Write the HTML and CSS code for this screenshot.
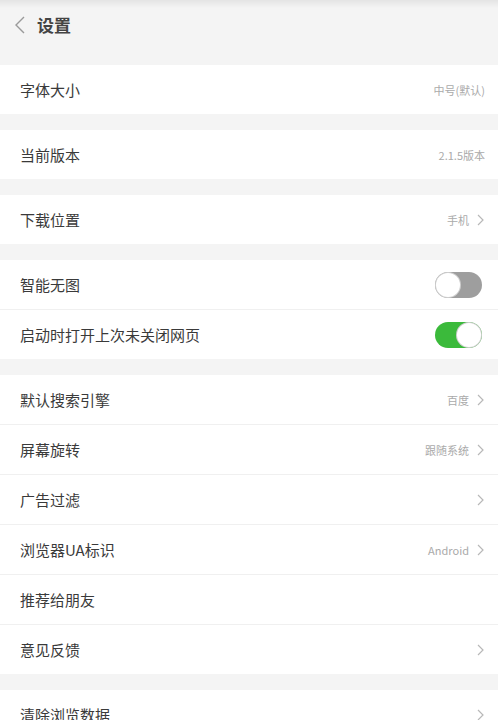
FILE: index.html
```html
<!DOCTYPE html>
<html lang="zh">
<head>
<meta charset="utf-8">
<title>设置</title>
<link rel="stylesheet" href="styles.css">
</head>
<body>
<div class="page">
  <header class="header">
    <svg class="back" width="12" height="18" viewBox="0 0 12 18"><path d="M10 1 L2 9 L10 17" fill="none" stroke="#9a9a9a" stroke-width="1.4"/></svg>
    <span class="title">设置</span>
  </header>

  <section class="group">
    <div class="row"><span class="label">字体大小</span><span class="value">中号(默认)</span></div>
  </section>
  <section class="group">
    <div class="row"><span class="label">当前版本</span><span class="value">2.1.5版本</span></div>
  </section>
  <section class="group">
    <div class="row"><span class="label">下载位置</span><span class="value">手机</span><svg class="chev" width="7" height="12" viewBox="0 0 7 12"><path d="M1 1 L6 6 L1 11" fill="none" stroke="#b8b8b8" stroke-width="1.2"/></svg></div>
  </section>
  <section class="group">
    <div class="row"><span class="label">智能无图</span><span class="toggle off"><span class="knob"></span></span></div>
    <div class="row"><span class="label">启动时打开上次未关闭网页</span><span class="toggle on"><span class="knob"></span></span></div>
  </section>
  <section class="group">
    <div class="row"><span class="label">默认搜索引擎</span><span class="value">百度</span><svg class="chev" width="7" height="12" viewBox="0 0 7 12"><path d="M1 1 L6 6 L1 11" fill="none" stroke="#b8b8b8" stroke-width="1.2"/></svg></div>
    <div class="row"><span class="label">屏幕旋转</span><span class="value">跟随系统</span><svg class="chev" width="7" height="12" viewBox="0 0 7 12"><path d="M1 1 L6 6 L1 11" fill="none" stroke="#b8b8b8" stroke-width="1.2"/></svg></div>
    <div class="row"><span class="label">广告过滤</span><svg class="chev" width="7" height="12" viewBox="0 0 7 12"><path d="M1 1 L6 6 L1 11" fill="none" stroke="#b8b8b8" stroke-width="1.2"/></svg></div>
    <div class="row"><span class="label">浏览器UA标识</span><span class="value">Android</span><svg class="chev" width="7" height="12" viewBox="0 0 7 12"><path d="M1 1 L6 6 L1 11" fill="none" stroke="#b8b8b8" stroke-width="1.2"/></svg></div>
    <div class="row"><span class="label">推荐给朋友</span></div>
    <div class="row"><span class="label">意见反馈</span><svg class="chev" width="7" height="12" viewBox="0 0 7 12"><path d="M1 1 L6 6 L1 11" fill="none" stroke="#b8b8b8" stroke-width="1.2"/></svg></div>
  </section>
  <section class="group">
    <div class="row"><span class="label">清除浏览数据</span><svg class="chev" width="7" height="12" viewBox="0 0 7 12"><path d="M1 1 L6 6 L1 11" fill="none" stroke="#b8b8b8" stroke-width="1.2"/></svg></div>
  </section>
</div>
</body>
</html>
```
FILE: styles.css
```css
* { box-sizing: border-box; }
html, body { margin: 0; padding: 0; }
body {
  background: #f4f4f4;
  font-family: "Noto Sans CJK SC", "Noto Sans", sans-serif;
  width: 498px;
  height: 720px;
  overflow: hidden;
}
.page {
  display: flex;
  flex-direction: column;
  gap: 16px;
  background: linear-gradient(#e4e4e4 0px, #f4f4f4 8px);
}
.header {
  height: 49px;
  display: flex;
  align-items: center;
  padding: 0 0 0 14px;
  gap: 11px;
}
.back { display: block; }
.title {
  font-size: 17px;
  font-weight: 700;
  color: #444;
  letter-spacing: 0;
}
.group {
  background: #fff;
  display: flex;
  flex-direction: column;
}
.row {
  height: 50px;
  display: flex;
  align-items: center;
  padding: 0 12px 0 20px;
  border-bottom: 1px solid #f0f0f0;
}
.row:last-child { border-bottom: none; height: 49px; }
.label {
  flex: 1;
  font-size: 15px;
  color: #3a3a3a;
}
.value {
  font-size: 11px;
  color: #aaa;
  margin-right: 1px;
}
.chev { display: block; margin-left: 7px; margin-right: 2px; }
.toggle {
  width: 47px;
  height: 26px;
  border-radius: 13px;
  position: relative;
  margin-right: 4px;
}
.toggle.off { background: #9e9e9e; }
.toggle.on { background: #3bba3b; }
.knob {
  position: absolute;
  top: 1px;
  width: 24px;
  height: 24px;
  border-radius: 50%;
  background: #fff;
  box-shadow: 0 0 0 1px #cfcfcf;
}
.toggle.off .knob { left: 1px; }
.toggle.on .knob { right: 1px; }
```
